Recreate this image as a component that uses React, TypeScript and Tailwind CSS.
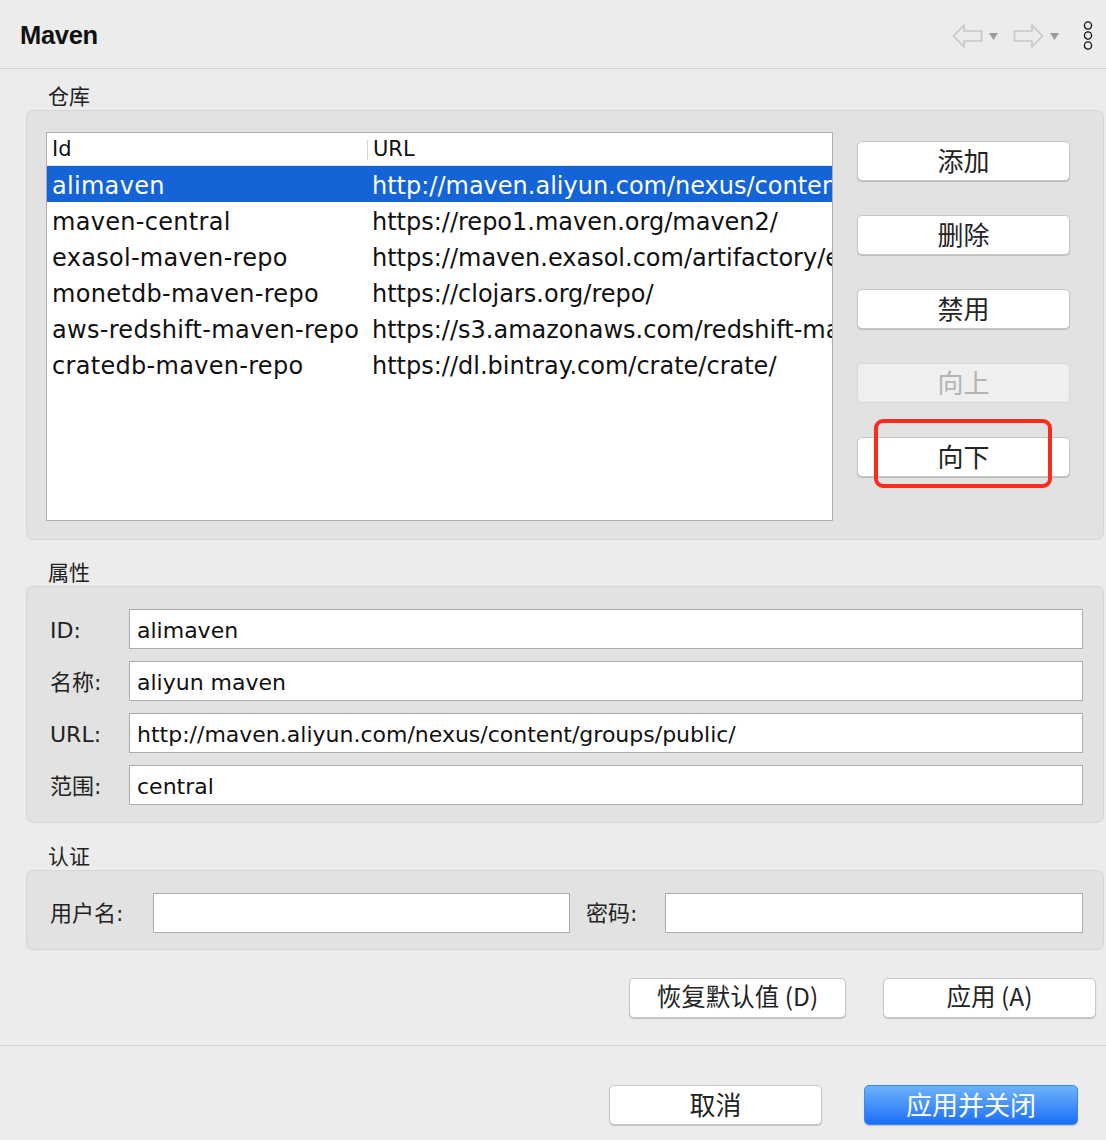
import React from "react";

const repos = [
  { id: "alimaven", url: "http://maven.aliyun.com/nexus/content/groups/public/" },
  { id: "maven-central", url: "https://repo1.maven.org/maven2/" },
  { id: "exasol-maven-repo", url: "https://maven.exasol.com/artifactory/exasol-releases" },
  { id: "monetdb-maven-repo", url: "https://clojars.org/repo/" },
  { id: "aws-redshift-maven-repo", url: "https://s3.amazonaws.com/redshift-maven-repository/release" },
  { id: "cratedb-maven-repo", url: "https://dl.bintray.com/crate/crate/" },
];

const font = "font-['DejaVu_Sans','Noto_Sans_CJK_SC',sans-serif]";
const cjk = "font-['Noto_Sans_CJK_SC',sans-serif]";

const Btn = ({
  children,
  className = "",
  disabled = false,
}: {
  children: React.ReactNode;
  className?: string;
  disabled?: boolean;
}) => (
  <button
    className={
      `h-[40px] rounded-[5px] border leading-none pb-[3px] ${cjk} ` +
      (disabled
        ? "border-[#d9d9d9] bg-[#efefef] text-[#b4b4b4] "
        : "border-[#c6c6c6] bg-white text-[#242424] shadow-[0_1px_1px_rgba(0,0,0,0.18)] ") +
      className
    }
  >
    {children}
  </button>
);

const Field = ({ value = "", className = "" }: { value?: string; className?: string }) => (
  <div
    className={`h-[40px] border border-[#ababab] bg-white pl-[7px] pt-[3px] flex items-center text-[22px] text-[#111] whitespace-nowrap overflow-hidden ${font} ${className}`}
  >
    {value}
  </div>
);

const NavArrow = ({ flip = false }: { flip?: boolean }) => (
  <svg width="31" height="26" viewBox="0 0 31 26" className={flip ? "-scale-x-100" : ""}>
    <path
      d="M1.5 13 L12 2 L12 8 L29.5 8 L29.5 18 L12 18 L12 24 Z"
      fill="none"
      stroke="#c8c8c8"
      strokeWidth="1.7"
      strokeLinejoin="round"
    />
  </svg>
);

const Caret = () => (
  <svg width="9" height="7" viewBox="0 0 9 7">
    <path d="M0 0 L9 0 L4.5 7 Z" fill="#9b9b9b" />
  </svg>
);

export default function App() {
  return (
    <div className={`w-[1106px] h-[1140px] bg-[#ececec] overflow-hidden ${font}`}>
      {/* header */}
      <div className="h-[69px] border-b border-[#d2d2d2] flex items-center pl-[20px] pr-[12px]">
        <div className="pt-[3px] text-[25.5px] font-bold text-[#111] font-['Liberation_Sans',sans-serif] tracking-[-0.3px]">
          Maven
        </div>
        <div className="ml-auto flex items-center pt-[4px]">
          <NavArrow />
          <div className="ml-[6px]">
            <Caret />
          </div>
          <div className="ml-[15px]">
            <NavArrow flip />
          </div>
          <div className="ml-[6px]">
            <Caret />
          </div>
          <svg width="12" height="32" viewBox="0 0 12 32" className="ml-[23px]">
            <circle cx="6" cy="5.5" r="3.6" fill="none" stroke="#111" strokeWidth="1.3" />
            <circle cx="6" cy="15.5" r="3.6" fill="none" stroke="#111" strokeWidth="1.3" />
            <circle cx="6" cy="25.5" r="3.6" fill="none" stroke="#111" strokeWidth="1.3" />
          </svg>
        </div>
      </div>

      <div className="pl-[26px] pr-[2px]">
        {/* 仓库 */}
        <div className={`h-[41px] pt-[12px] pl-[22px] flex items-center text-[21px] text-[#222] ${cjk}`}>仓库</div>
        <div className="h-[430px] rounded-[7px] border border-[#d6d6d6] bg-[#e2e2e2] flex pl-[19px] pt-[21px]">
          <div className="w-[787px] h-[389px] border border-[#b0b0b0] bg-white overflow-hidden">
            <div className="h-[33px] flex items-center border-b border-[#e4e4e4] text-[21px] text-[#111] pt-[1px]">
              <div className="w-[320px] pl-[5px]">Id</div>
              <div className="w-px h-[20px] bg-[#d4d4d4]" />
              <div className="pl-[5px]">URL</div>
            </div>
            {repos.map((r, i) => (
              <div
                key={r.id}
                className={
                  "h-[36px] flex items-center pt-[3px] text-[24px] tracking-[0.3px] whitespace-nowrap " +
                  (i === 0 ? "bg-[#1464d8] text-white" : "text-[#111]")
                }
              >
                <div className="w-[321px] pl-[5px] shrink-0">{r.id}</div>
                <div className="pl-[4px] tracking-[0px]">{r.url}</div>
              </div>
            ))}
          </div>
          <div className="ml-[24px] pt-[9px] flex flex-col gap-[34px] text-[26px]">
            <Btn className="w-[213px]">添加</Btn>
            <Btn className="w-[213px]">删除</Btn>
            <Btn className="w-[213px]">禁用</Btn>
            <Btn className="w-[213px]" disabled>
              向上
            </Btn>
            <div className="relative">
              <Btn className="w-[213px]">向下</Btn>
              <div className="absolute left-[17px] top-[-18px] w-[178px] h-[69px] rounded-[9px] border-[4px] border-[#fd2b1e]" />
            </div>
          </div>
        </div>

        {/* 属性 */}
        <div className={`h-[46px] pt-[18px] pl-[22px] flex items-center text-[21px] text-[#222] ${cjk}`}>属性</div>
        <div className="h-[237px] rounded-[7px] border border-[#d6d6d6] bg-[#e2e2e2] pl-[23px] pr-[20px] pt-[22px] flex flex-col gap-[12px]">
          {[
            ["ID:", "alimaven"],
            ["名称:", "aliyun maven"],
            ["URL:", "http://maven.aliyun.com/nexus/content/groups/public/"],
            ["范围:", "central"],
          ].map(([label, value]) => (
            <div key={label} className="flex items-center">
              <div className="w-[79px] pt-[3px] text-[22px] text-[#222]">{label}</div>
              <Field value={value} className="flex-1" />
            </div>
          ))}
        </div>

        {/* 认证 */}
        <div className={`h-[47px] pt-[19px] pl-[22px] flex items-center text-[21px] text-[#222] ${cjk}`}>认证</div>
        <div className="h-[80px] rounded-[7px] border border-[#d6d6d6] bg-[#e2e2e2] pl-[23px] pr-[20px] pt-[22px] flex">
          <div className="flex items-center h-[40px]">
            <div className="w-[103px] text-[22px] text-[#222]">用户名:</div>
            <Field className="w-[417px]" />
            <div className="w-[95px] pl-[16px] text-[22px] text-[#222]">密码:</div>
            <Field className="w-[418px]" />
          </div>
        </div>
      </div>

      {/* apply row */}
      <div className="flex justify-end pr-[10px] pt-[28px] gap-[37px] text-[24.5px]">
        <Btn className="w-[217px]">恢复默认值 (D)</Btn>
        <Btn className="w-[213px]">应用 (A)</Btn>
      </div>

      <div className="mt-[27px] h-px bg-[#d4d4d4]" />

      <div className="flex justify-end pr-[28px] pt-[39px] gap-[42px] text-[26px]">
        <Btn className="w-[213px]">取消</Btn>
        <button
          className={`w-[214px] h-[40px] pb-[3px] rounded-[5px] border border-[#3a86f5] bg-gradient-to-b from-[#6db2fb] to-[#1a6ef6] text-white text-[26px] leading-none shadow-[0_1px_1px_rgba(0,0,0,0.18)] ${cjk}`}
        >
          应用并关闭
        </button>
      </div>
    </div>
  );
}
